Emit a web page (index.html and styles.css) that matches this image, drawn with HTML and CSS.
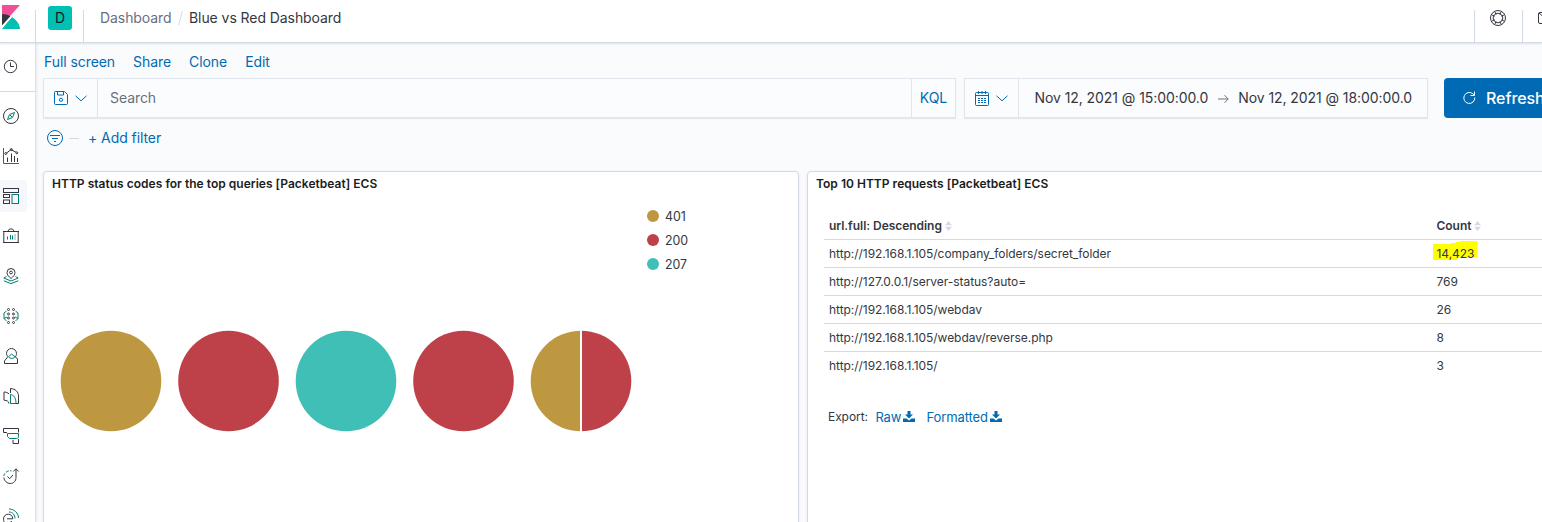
FILE: index.html
```html
<!DOCTYPE html>
<html lang="en">
<head>
<meta charset="utf-8">
<title>Blue vs Red Dashboard</title>
<link rel="stylesheet" href="styles.css">
</head>
<body>
<header class="header">
  <div class="logo"><svg width="18" height="24" viewBox="0 0 18 24"><path fill="#f04e98" d="M0 0h18L0 20z"/><path fill="#343741" d="M0 9c3 0 6 .8 8.400 2.200L0 21z"/><path fill="#00bfb3" d="M9.800 12C14.500 14.500 17.300 18.900 18.200 24H0z"/><path stroke="#fff" stroke-width="1.200" d="M0 21.500L9.500 11.500"/></svg></div>
  <div class="space"><span class="badge">D</span></div>
  <nav class="crumbs"><span class="crumb">Dashboard</span><svg class="slash" width="5" height="16" viewBox="0 0 5 16"><path d="M4.300 1L.7 15" stroke="#d3dae6"/></svg><span class="current">Blue vs Red Dashboard</span></nav>
  <div class="hbtn"><svg width="16" height="16" viewBox="0 0 16 16" fill="none" stroke="#343741"><circle cx="8" cy="8" r="7.500"/><circle cx="8" cy="8" r="4.800"/><path d="M2 5l2.800 1.200M5 2l1.200 2.800M11 2L9.800 4.800M14 5l-2.800 1.200M2 11l2.800-1.200M5 14l1.200-2.800M11 14l-1.200-2.800M14 11l-2.800-1.200"/></svg></div>
  <div class="hbtn"><svg width="16" height="16" viewBox="0 0 16 16" fill="none" stroke="#343741"><rect x=".5" y="2.500" width="15" height="11" rx="1.500"/><path d="M1 3l7 6 7-6"/></svg></div>
</header>
<div class="body">
<aside class="side">
  <div class="recent"><svg width="16" height="16" viewBox="0 0 16 16"><circle cx="7.500" cy="8.500" r="6.200"/><path d="M7.500 4.500v4h3.500"/></svg></div>
  <div class="apps">
    <a class="app"><svg width="16" height="16" viewBox="0 0 16 16"><circle cx="8" cy="8" r="7.500"/><path class="g" d="M11.500 4.500L9.500 9.500 4.500 11.500 6.500 6.500zM7 7l2 2"/></svg></a>
    <a class="app"><svg width="16" height="16" viewBox="0 0 16 16"><path class="g" d="M.5 0v15.500H16"/><path d="M4.500 14V9.500M8.500 14V5.500M11.500 14V8M14.500 14V10M3.500 5L8 1.700l5 2.500"/><circle cx="2.800" cy="5.500" r="1"/><circle cx="8.300" cy="1.500" r="1"/><circle cx="13.800" cy="4.800" r="1"/></svg></a>
    <a class="app on"><svg width="16" height="16" viewBox="0 0 16 16"><rect x=".5" y=".5" width="15" height="4"/><rect x=".5" y="6.500" width="6" height="3"/><rect x=".5" y="12" width="6" height="3.500"/><rect class="g" x="9" y="6.500" width="6.500" height="9"/></svg></a>
    <a class="app"><svg width="16" height="16" viewBox="0 0 16 16"><path d="M5 3L6.500 1h3L11 3M0 3.500h16M.8 3.500v11M15.200 3.500v11M0 14.500h16"/><path class="g" d="M4.500 11.500V8.500M7.500 11.500V7M9.500 11.500V7.500M12 6.500v1M12 8.500v1M12 10.500v1"/></svg></a>
    <a class="app"><svg width="16" height="16" viewBox="0 0 16 16"><path d="M8 10.500C5.500 8.500 4 6.700 4 4.500a4 4 0 0 1 8 0c0 2.200-1.500 4-4 6z"/><circle cx="8" cy="4.500" r="1.400"/><path class="g" d="M3.500 8.500L.8 10 8 13l7.200-3-2.700-1.500M.8 12.800L8 15.600l7.200-2.800"/></svg></a>
    <a class="app"><svg width="16" height="16" viewBox="0 0 16 16"><path class="g" d="M3.500 3L1 5v5.500L3.500 13M1 10.500L4 9M12.500 3L15 5v5.500L12.500 13M15 10.500L12 9"/><g><circle cx="5.500" cy="1.500" r="1"/><circle cx="10.500" cy="1.500" r="1"/><circle cx="5.500" cy="6" r="1"/><circle cx="10.500" cy="6" r="1"/><circle cx="5.500" cy="10" r="1"/><circle cx="10.500" cy="10" r="1"/><circle cx="5.500" cy="14.500" r="1"/><circle cx="10.500" cy="14.500" r="1"/></g></svg></a>
    <a class="app"><svg width="16" height="16" viewBox="0 0 16 16"><path d="M5 8.500C3.700 7.500 3.500 6.500 3.500 5.500a5 5 0 0 1 10 0c0 1.500-.4 2.500-1.400 3.400 1.700.5 2.400 1.600 2.400 3.100v3.500h-13V13z"/><path class="g" d="M5.500 8.800L8.500 6l3.500 2.800c-1 2-5 2.200-6.500 0z"/></svg></a>
    <a class="app"><svg width="16" height="16" viewBox="0 0 16 16"><path d="M6 15.500C5.500 13 4 12.500 1 12.200V4c2 0 4 .8 5 2M7.500 5V.5c5 .3 8 3.500 8 7.500v7.500H13"/><path class="g" d="M7.500 15.500V6.500c3.500.5 5.500 3.500 5.500 9z"/></svg></a>
    <a class="app"><svg width="16" height="16" viewBox="0 0 16 16"><path d="M4 4.500H.5v-4h15v4M10 12v3.500h5.500V11"/><path class="g" d="M4.500 5.500h11v3c0 1.500-1 2-2 2h-7l-2-2z"/></svg></a>
    <a class="app"><svg width="16" height="16" viewBox="0 0 16 16"><path d="M.8 9.500C1.300 13 4 15.500 7.200 15.500c3.500 0 5.800-2.500 5.800-6V1M10.300 3.500L13 .8l2.700 2.700M4.500 8.500l2.200 2.200L10 7"/><path class="g" stroke-dasharray="3 1.500" d="M.8 8C1.300 4.800 4 2.500 8.500 2.800"/></svg></a>
    <a class="app"><svg width="16" height="16" viewBox="0 0 16 16"><path d="M2.500 15.500C1.500 14.500.5 13 .5 11.200c0-3 2-5 4.700-5s4.600 2 4.600 4.600H4M9 13c-1 1.500-3 2-4.500 1.200"/><path class="g" d="M6 4c3.500 0 6 3 6 6.500M6 1c5 0 9.500 4 9.500 9"/></svg></a>
  </div>
</aside>
<main class="main">
  <nav class="menu"><a>Full screen</a><a>Share</a><a>Clone</a><a>Edit</a></nav>
  <div class="query">
    <div class="box search">
      <div class="seg saved"><svg width="14" height="14" viewBox="0 0 14 14"><path d="M.5 1.500a1 1 0 0 1 1-1h9l3 3v9a1 1 0 0 1-1 1h-11a1 1 0 0 1-1-1zM3.500.5v3.500h6V.5"/><circle cx="7" cy="8.800" r="1.600"/></svg><svg width="12" height="7" viewBox="0 0 12 7"><path d="M.5.800L6 5.800 11.500.800"/></svg></div>
      <div class="input">Search</div>
      <div class="kql">KQL</div>
    </div>
    <div class="box dates">
      <div class="seg cal"><svg width="14" height="15" viewBox="0 0 14 15"><rect x=".5" y="1.500" width="13" height="13" rx="1"/><path d="M1 4.500h12M3.500 0v3M7 0v3M10.500 0v3"/><path stroke-dasharray="2 1" d="M3 7.500h8M3 9.500h8M3 11.500h8"/></svg><svg width="12" height="7" viewBox="0 0 12 7"><path d="M.5.800L6 5.800 11.500.800"/></svg></div>
      <span class="from">Nov 12, 2021 @ 15:00:00.0</span>
      <svg class="arrow" width="11" height="10" viewBox="0 0 11 10"><path d="M0 5h10M6.500 1.200L10.200 5 6.500 8.800"/></svg>
      <span>Nov 12, 2021 @ 18:00:00.0</span>
    </div>
    <div class="refresh"><svg width="13" height="14" viewBox="0 0 13 14"><path d="M11.800 6.500A5.500 5.500 0 1 1 9.800 2.700l1.500 1.500M11.500 .5v4h-4"/></svg><span>Refresh</span></div>
  </div>
  <div class="filters"><svg width="16" height="16" viewBox="0 0 16 16"><circle cx="8" cy="8" r="7.500"/><path d="M3 5.500h10M5 8.500h6M7 11.500h2"/></svg><i class="dash"></i><a>+ Add filter</a></div>
  <div class="grid">
    <section class="panel pies-panel">
      <h2>HTTP status codes for the top queries [Packetbeat] ECS</h2>
      <div class="viz">
        <div class="pies">
          <svg class="pie" viewBox="0 0 101 101"><circle cx="50" cy="51" r="50.300" fill="#be9841"/></svg>
          <svg class="pie" viewBox="0 0 101 101"><circle cx="50.500" cy="51" r="50.300" fill="#be4049"/></svg>
          <svg class="pie" viewBox="0 0 101 101"><circle cx="50" cy="51" r="50.300" fill="#40bfb6"/></svg>
          <svg class="pie" viewBox="0 0 101 101"><circle cx="50.500" cy="51" r="50.300" fill="#be4049"/></svg>
          <svg class="pie" viewBox="0 0 101 101"><path fill="#be9841" d="M50 .7a50.300 50.300 0 0 0 0 100.600z"/><path fill="#be4049" d="M50 .7a50.300 50.300 0 0 1 0 100.600z"/><path stroke="#fff" stroke-width="2" d="M50 0v102"/></svg>
        </div>
        <ul class="legend"><li><i class="dot gold"></i><span>401</span></li><li><i class="dot red"></i><span>200</span></li><li><i class="dot teal"></i><span>207</span></li></ul>
      </div>
    </section>
    <section class="panel table-panel">
      <h2>Top 10 HTTP requests [Packetbeat] ECS</h2>
      <div class="table">
        <div class="row head"><span>url.full: Descending<svg class="sort" width="7" height="10" viewBox="0 0 7 10"><path d="M0 4.300L3.500 0 7 4.300zM0 5.700h7L3.500 10z"/></svg></span><span>Count<svg class="sort" width="7" height="10" viewBox="0 0 7 10"><path d="M0 4.300L3.500 0 7 4.300zM0 5.700h7L3.500 10z"/></svg></span></div>
        <div class="row"><span>http://192.168.1.105/company_folders/secret_folder</span><span><b class="mark">14,423</b></span></div>
        <div class="row"><span>http://127.0.0.1/server-status?auto=</span><span>769</span></div>
        <div class="row"><span>http://192.168.1.105/webdav</span><span>26</span></div>
        <div class="row"><span>http://192.168.1.105/webdav/reverse.php</span><span>8</span></div>
        <div class="row"><span>http://192.168.1.105/</span><span>3</span></div>
      </div>
      <div class="export"><span>Export:</span><a>Raw<svg width="12" height="11" viewBox="0 0 12 11"><path d="M4.500 0h3v3.500H10L6 7.500 2 3.500h2.500zM0 7.500h3.500L6 9.500l2.500-2H12V11H0z"/></svg></a><a>Formatted<svg width="12" height="11" viewBox="0 0 12 11"><path d="M4.500 0h3v3.500H10L6 7.500 2 3.500h2.500zM0 7.500h3.500L6 9.500l2.500-2H12V11H0z"/></svg></a></div>
    </section>
  </div>
</main>
</div>
</body>
</html>
```
FILE: styles.css
```css
* { box-sizing: border-box; }
body { margin: 0; width: 1542px; height: 522px; overflow: hidden; background: #fafbfd; color: #343741; font: 400 14px/20px Inter, sans-serif; letter-spacing: -.07px; }
svg { display: block; flex: none; fill: none; overflow: visible; }
a { color: #006bb4; }
.header { display: flex; height: 43px; background: #fff; border-bottom: 1px solid #d3dae6; box-shadow: 0 1px 2px rgba(152,162,179,.3); position: relative; }
.logo { width: 35px; padding: 5px 0 0 2px; }
.space { width: 49px; margin-top: 10px; border: solid #d3dae6; border-width: 0 1px; padding-left: 12px; }
.badge { display: block; width: 24px; height: 24px; margin-top: -4px; border-radius: 3px; background: #00bfb3; color: #1a1c21; text-align: center; line-height: 24px; }
.crumbs { display: flex; flex: 1; padding: 8px 0 0 16px; }
.crumb { width: 72px; color: #69707d; }
.slash { margin: 2px 5px 0 6px; }
.current { margin-left: 1px; }
.hbtn { width: 48px; margin-top: 10px; border-left: 1px solid #d3dae6; padding-left: 15px; }
.hbtn:last-child { width: 20px; overflow: hidden; }
.body { display: flex; height: 479px; }
.side { width: 36px; flex: none; background: #fff; border-right: 1px solid #dfe4ed; box-shadow: 1px 0 2px rgba(152,162,179,.2); }
.side svg { stroke: #343741; }
.side .g { stroke: #017d73; }
.recent { height: 49px; border-bottom: 1px solid #d3dae6; padding: 15px 0 0 3px; }
.apps { padding-top: 4px; }
.app { display: flex; align-items: center; width: 27px; height: 32px; margin: 4px 0 8px; padding-left: 3px; }
.on { background: #f5f7fa; border-radius: 0 4px 4px 0; }
.main { flex: 1; min-width: 0; padding: 9px 0 0 7px; }
.menu { display: flex; gap: 18px; padding-left: 1px; }
.query { display: flex; margin-top: 6px; width: 1520px; }
.box { display: flex; align-items: center; height: 40px; background: #fbfcfd; border: 1px solid #e0e5ee; box-shadow: 0 1px 1px rgba(152,162,179,.2); }
.box svg, .filters svg { stroke: #006bb4; }
.search { width: 913px; flex: none; }
.seg { display: flex; align-items: center; gap: 7px; height: 38px; border-right: 1px solid #e0e5ee; padding-left: 10px; width: 54px; }
.input { flex: 1; padding-left: 12px; color: #69707d; }
.kql { width: 44px; height: 38px; line-height: 38px; border-left: 1px solid #e0e5ee; text-align: center; color: #006bb4; }
.dates { width: 464px; flex: none; margin-left: 8px; }
.from { margin-left: 15.500px; }
.box .arrow { stroke: #69707d; margin: 2px 9px 0 10px; }
.refresh { display: flex; flex: none; align-items: center; gap: 10px; width: 120px; height: 40px; margin-left: 16px; padding-left: 19px; border-radius: 4px; background: #006bb4; color: #fff; font-size: 16px; font-weight: 500; }
.refresh svg { stroke: #fff; }
.filters { display: flex; align-items: center; height: 20px; margin-top: 10px; padding-left: 4px; }
.dash { width: 10px; height: 1px; background: #d3dae6; margin: 0 9px 0 6px; }
.grid { display: flex; gap: 8px; margin-top: 23px; }
.panel { height: 370px; flex: none; background: #fff; border: 1px solid #d3dae6; border-radius: 4px; box-shadow: 0 1px 3px rgba(152,162,179,.2); }
.pies-panel { width: 756px; }
.table-panel { width: 760px; }
h2 { margin: 0; padding: 0 8px; height: 24px; font-size: 12px; line-height: 24px; font-weight: 600; color: #1a1c21; letter-spacing: .02px; }
.viz { display: flex; padding-left: 16.500px; }
.pies { display: flex; gap: 16.500px; padding-top: 134px; }
.pie { width: 101px; height: 101px; }
.legend { list-style: none; margin: 8px 0 0 15.500px; padding: 0; font-size: 12.400px; }
.legend li { display: flex; align-items: center; height: 24px; gap: 6px; }
.legend span { padding-top: 2px; }
.dot { width: 12px; height: 12px; border-radius: 50%; }
.gold { background: #be9841; }
.red { background: #be4049; }
.teal { background: #40bfb6; }
.table { margin: 16px 0 0 16px; font-size: 12px; letter-spacing: -.04px; }
.row { display: flex; height: 28px; line-height: 27px; border-bottom: 1px solid #d3dae6; padding-left: 5px; }
.row:last-child { border-color: transparent; }
.row span:first-child { width: 607.500px; }
.row span { display: flex; align-items: center; }
.head { font-weight: 600; }
.sort { margin-left: 3px; fill: #d3dae6; }
.mark { font-weight: inherit; position: relative; z-index: 0; }
.mark::before { content: ""; position: absolute; z-index: -1; left: -4px; top: 1px; width: 45px; height: 19px; background: #ff0; clip-path: polygon(0 3px, 18px 3px, 18px 2px, 23px 2px, 23px 1px, 27px 1px, 27px 0, 45px 0, 45px 16px, 35px 16px, 35px 17px, 25px 17px, 25px 19px, 0 19px); }
.export { display: flex; margin: 27px 0 0 20px; font-size: 12px; }
.export a { display: flex; align-items: center; font-size: 13px; margin-left: 7.500px; gap: 2px; letter-spacing: -.09px; }
.export a + a { margin-left: 11px; }
.export svg { fill: #006bb4; margin-top: -2px; }
```
